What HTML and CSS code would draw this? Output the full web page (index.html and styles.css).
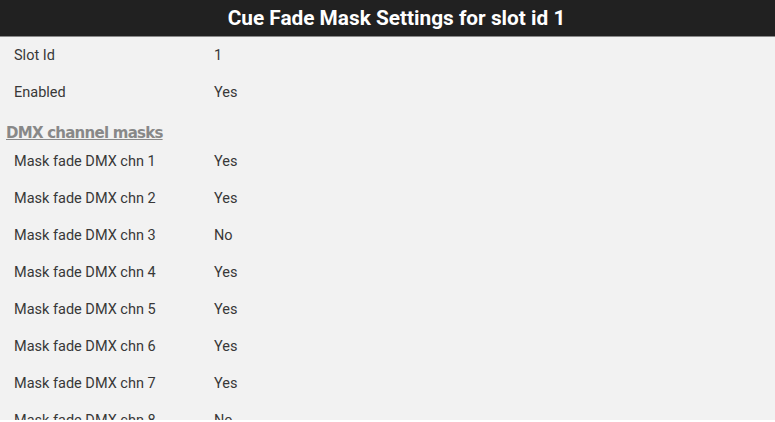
FILE: index.html
```html
<!DOCTYPE html>
<html>
<head>
<meta charset="utf-8">
<link rel="stylesheet" href="styles.css">
</head>
<body>
<header class="topbar"><h1 class="title">Cue Fade Mask Settings for slot id 1</h1></header>
<main class="content">
  <div class="row"><span class="label">Slot Id</span><span class="value">1</span></div>
  <div class="row"><span class="label">Enabled</span><span class="value">Yes</span></div>
  <h2 class="section">DMX channel masks</h2>
  <div class="row"><span class="label">Mask fade DMX chn 1</span><span class="value">Yes</span></div>
  <div class="row"><span class="label">Mask fade DMX chn 2</span><span class="value">Yes</span></div>
  <div class="row"><span class="label">Mask fade DMX chn 3</span><span class="value">No</span></div>
  <div class="row"><span class="label">Mask fade DMX chn 4</span><span class="value">Yes</span></div>
  <div class="row"><span class="label">Mask fade DMX chn 5</span><span class="value">Yes</span></div>
  <div class="row"><span class="label">Mask fade DMX chn 6</span><span class="value">Yes</span></div>
  <div class="row"><span class="label">Mask fade DMX chn 7</span><span class="value">Yes</span></div>
  <div class="row"><span class="label">Mask fade DMX chn 8</span><span class="value">No</span></div>
  <div class="row"><span class="label">Mask fade DMX chn 9</span><span class="value">Yes</span></div>
</main>
</body>
</html>
```
FILE: styles.css
```css
html, body {
  margin: 0;
  padding: 0;
  height: 100%;
  background: #ffffff;
}
body {
  display: flex;
  flex-direction: column;
  font-family: Roboto, "Liberation Sans", sans-serif;
  overflow: hidden;
}
.topbar {
  flex: 0 0 auto;
  height: 36px;
  background: #212121;
  border-bottom: 1px solid #8a8a8a;
  display: flex;
  align-items: center;
  justify-content: center;
}
.title {
  margin: 0;
  padding-left: 18px;
  color: #ffffff;
  font-size: 20.8px;
  font-weight: 700;
  line-height: 36px;
}
.content {
  height: 383px;
  background: #f2f2f2;
  overflow: hidden;
}
.row {
  display: flex;
  align-items: center;
  height: 37px;
  padding-left: 14px;
  font-size: 14.5px;
  color: #383838;
}
.label {
  width: 200px;
}
.section {
  margin: 0;
  padding: 13px 6px 0;
  line-height: 19px;
  font-family: "DejaVu Sans", Verdana, sans-serif;
  font-size: 15px;
  letter-spacing: -0.75px;
  font-weight: 700;
  color: #888888;
  text-decoration: underline;
}
```
